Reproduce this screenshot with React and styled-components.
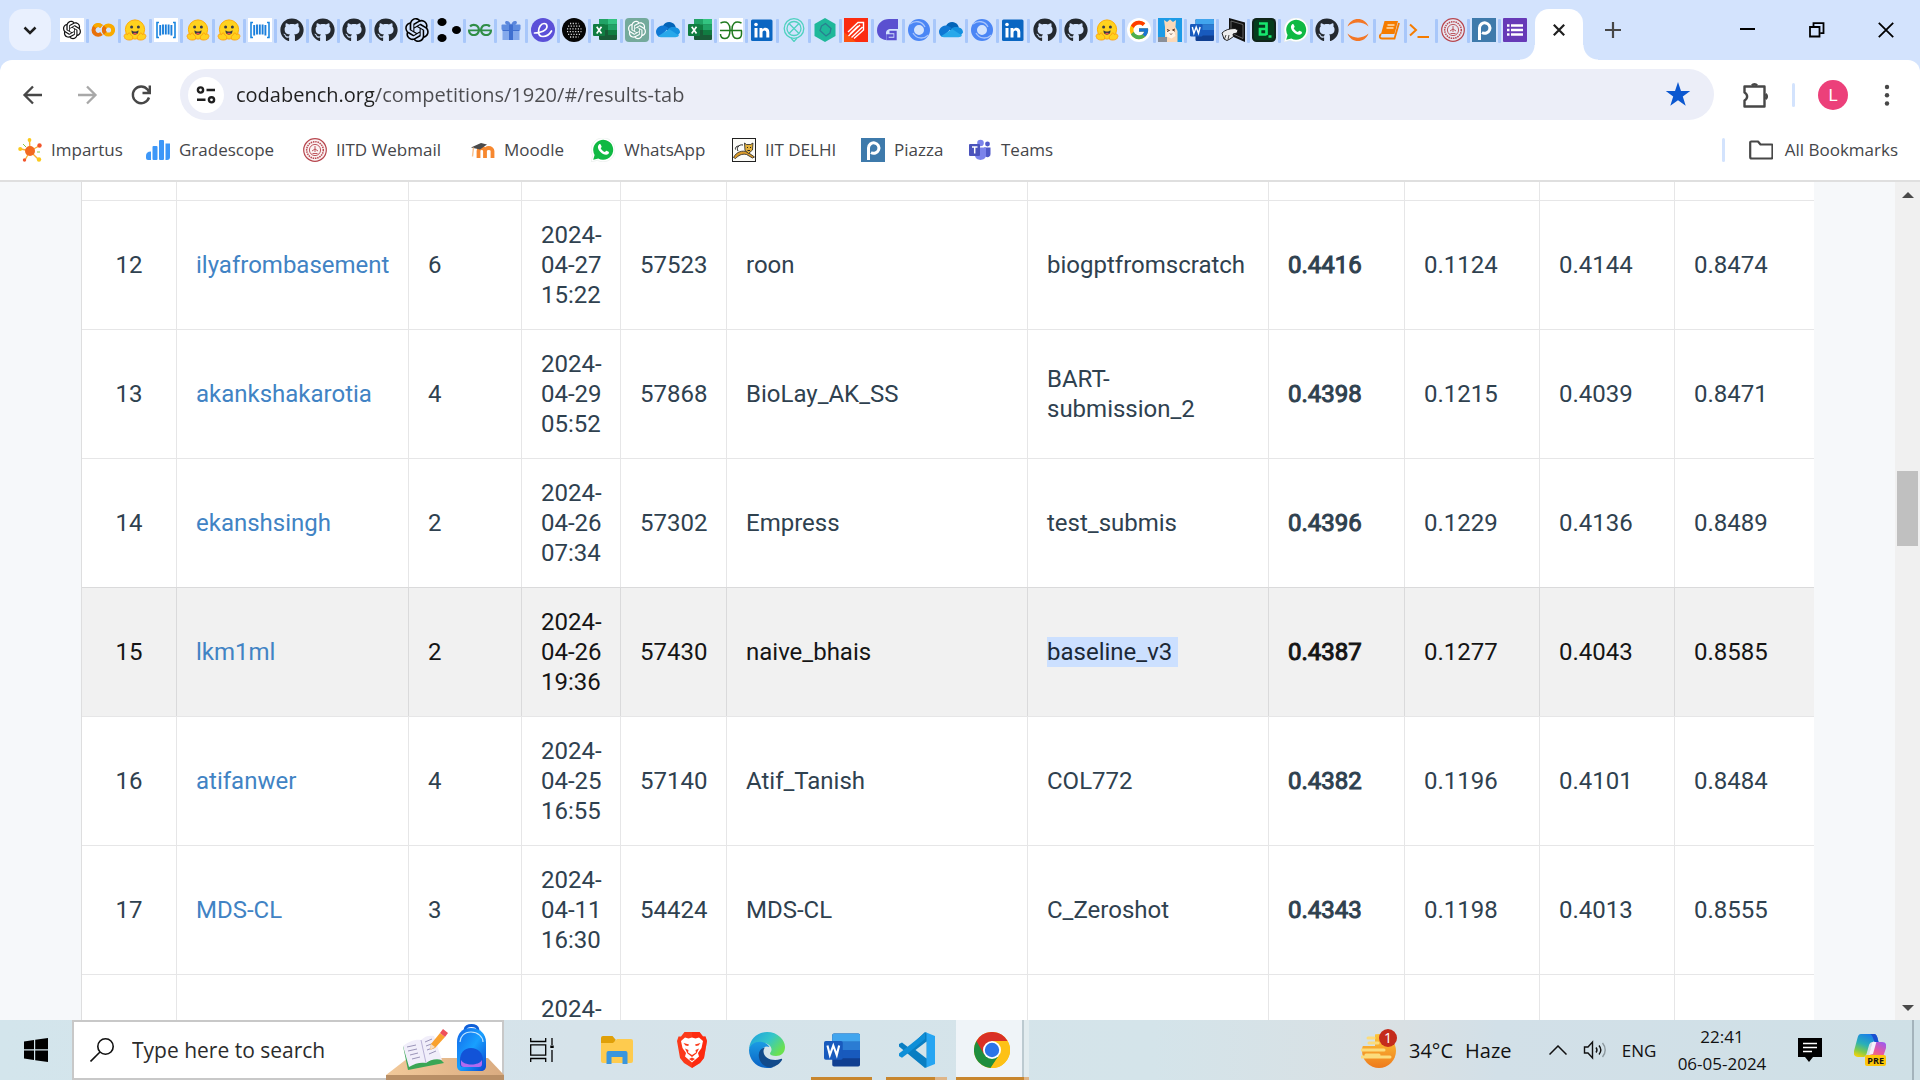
import React from "react";
import styled, { createGlobalStyle, css } from "styled-components";
import { RiOpenaiFill } from "react-icons/ri";
import { FaGithub } from "react-icons/fa";
import { FcGoogle } from "react-icons/fc";
import { SiGeeksforgeeks } from "react-icons/si";

const GlobalStyle = createGlobalStyle`
  *, *::before, *::after { box-sizing: border-box; }
  html, body, #root { height: 100%; }
  body { margin: 0; overflow: hidden; background: #fff; font-family: "Open Sans", sans-serif; }
  button, input { font: inherit; color: inherit; border: 0; padding: 0; margin: 0; background: none; outline: none; }
  button { cursor: pointer; }
  a { text-decoration: none; color: inherit; }
  svg { display: block; flex: none; }
`;

/* ---------- icons ---------- */

const Icon = ({ size = 24, w, h, box = "0 0 24 24", children, ...rest }) => (
  <svg width={w || size} height={h || size} viewBox={box} fill="none" aria-hidden="true" {...rest}>
    {children}
  </svg>
);

const OpenAiWhite = () => (
  <Icon>
    <rect width="24" height="24" fill="#fff" />
    <RiOpenaiFill x="1" y="1" size={22} color="#111" />
  </Icon>
);
const OpenAiBlack = () => (
  <Icon box="2 2 20 20"><RiOpenaiFill size={24} color="#000" /></Icon>
);
const OpenAiGreen = () => (
  <Icon>
    <rect width="24" height="24" rx="4" fill="#74aa9c" />
    <RiOpenaiFill x="1" y="1" size={22} color="#fff" />
  </Icon>
);
const Colab = () => (
  <Icon strokeWidth="4">
    <circle cx="17.500" cy="12" r="4.600" stroke="#f9ab00" />
    <path d="M10.500 8.400A4.800 4.800 0 1 0 10.500 15.600" stroke="#e8710a" />
    <path d="M3.400 8.800a4.800 4.800 0 0 1 7-.4" stroke="#f9ab00" />
    <path d="M14.200 15.200a4.600 4.600 0 0 1 0-6.400" stroke="#e8710a" />
  </Icon>
);
const Hug = () => (
  <Icon>
    <circle cx="12" cy="11.500" r="9.600" fill="#ffd21e" stroke="#ffac03" strokeWidth="1" />
    <path d="M8.600 12.300c1.600 1.600 5.200 1.600 6.800 0 .5 2.600-1.200 4.400-3.400 4.400s-3.900-1.800-3.400-4.400z" fill="#3a3b45" />
    <path d="M10 15.600c1-1.200 3-1.200 4 0-1 1.200-3 1.200-4 0z" fill="#ef4e4e" />
    <circle cx="8.600" cy="9" r="1.500" fill="#3a3b45" /><circle cx="15.400" cy="9" r="1.500" fill="#3a3b45" />
    <path d="M1.500 17c.5-1.500 1.800-1 3-.4l1-1.600c1-.6 1.700.2 1.700 1.200 2.500 1.500 3.300 3 2 5.300-2.500 1-7.500.6-7.700-2.200-.6-.7-.5-1.600 0-2.300z" fill="#ffd21e" stroke="#ff9d0b" strokeWidth=".9" />
    <path d="M22.500 17c-.5-1.500-1.800-1-3-.4l-1-1.600c-1-.6-1.700.2-1.700 1.200-2.500 1.500-3.300 3-2 5.300 2.500 1 7.500.6 7.700-2.200.6-.7.5-1.600 0-2.300z" fill="#ffd21e" stroke="#ff9d0b" strokeWidth=".9" />
  </Icon>
);
const Barcode = () => (
  <Icon>
    <rect width="24" height="24" fill="#fff" />
    <path d="M5 4.500H3v15h2M19 4.500h2v15h-2" stroke="#1a86e0" strokeWidth="1.600" />
    <path d="M6.200 7v10.500M9 6.500v10M11.800 6.500v10M14.600 6.500v10M17.400 7v10.500" stroke="#1a7fdc" strokeWidth="1.900" />
  </Icon>
);
const GitHub = () => <FaGithub size={24} color="#24292f" aria-hidden="true" />;
const Dots = () => (
  <Icon>
    <g fill="#000"><ellipse cx="5" cy="4" rx="4.600" ry="4" /><ellipse cx="5" cy="20" rx="4.600" ry="4" /><ellipse cx="19.500" cy="12" rx="4.500" ry="4" /></g>
  </Icon>
);
const Gfg = () => <SiGeeksforgeeks size={24} color="#2f8d46" aria-hidden="true" />;
const GfgWhite = () => (
  <Icon>
    <rect width="24" height="24" fill="#fff" />
    <path d="M1.500 5c7-3 9.500 1.500 9.500 6.500 0 5-1.200 9-5 9-2.400 0-4.500-1.500-4.500-4.500M1 12.500h22M22.500 5c-7-3-9.500 1.500-9.500 6.500 0 5 1.200 9 5 9 2.400 0 4.500-1.500 4.500-4.500v-3.500" stroke="#1f7a1f" strokeWidth="1.500" />
  </Icon>
);
const Gift = () => (
  <Icon>
    <path d="M12 7.500C5 8 5 2.500 8 3c2 0 3.500 2 4 4.500.5-2.500 2-4.500 4-4.500 3-.5 3 5-4 4.500z" fill="#5a86dc" />
    <rect x="2.500" y="6.500" width="19" height="5.500" rx="1" fill="#5f8de0" />
    <rect x="3.500" y="12" width="17" height="10" fill="#84a9ec" />
    <rect x="10" y="6.500" width="4" height="15.500" fill="#3f6fd0" />
    <path d="M3.500 12.500h17" stroke="#3f6fd0" strokeWidth="1" />
  </Icon>
);
const ELogo = () => (
  <Icon>
    <circle cx="12" cy="12" r="12" fill="#5b50d8" />
    <path d="M3.500 15c6 0 12.500-2.500 12.500-6.500 0-2-1.400-3-3-3-3 0-5.500 4-5.500 8 0 3 1.500 5 4.500 5 3.500 0 6.500-2 8.500-5.500" stroke="#fff" strokeWidth="1.700" strokeLinecap="round" />
  </Icon>
);
const DotGrid = () => (
  <Icon>
    <circle cx="12" cy="12" r="12" fill="#060606" />
    <g stroke="#d8d8d8" strokeWidth="1.300" strokeDasharray="1.200 1.500">
      <path d="M8 5.500h8.500M6 8.200h12.500M5 10.900h14.500M5 13.600h14.500M6 16.300h12.500M8 19h8.500" />
    </g>
  </Icon>
);
const Excel = () => (
  <Icon>
    <rect x="6" y="1" width="18" height="21" rx="1" fill="#185c37" />
    <rect x="6" y="1" width="9" height="10" fill="#21a366" /><rect x="15" y="1" width="9" height="5.500" fill="#33c481" />
    <rect x="15" y="6.500" width="9" height="5.500" fill="#21a366" /><rect x="6" y="6.500" width="9" height="5.500" fill="#107c41" />
    <rect x="15" y="12" width="9" height="5" fill="#107c41" />
    <rect x="0" y="6" width="12" height="12" rx="1" fill="#107c41" />
    <path d="M3.700 8.800l4.800 6.600M8.500 8.800l-4.800 6.600" stroke="#fff" strokeWidth="1.700" />
  </Icon>
);
const OneDrive = () => (
  <Icon>
    <path d="M7 8c1.500-3.500 6-5 9.500-3 2 1 3 2.700 3.300 4.500l-6 5z" fill="#0364b8" />
    <path d="M1 17c-2.500-3.500 0-9 5.500-9.500 2.500 0 4 1 6 2.500L4 19c-1.200-.2-2.300-.9-3-2z" fill="#0f78d4" />
    <path d="M12 11c2-2 5-2.500 8-1.500 3 .5 4 3 4 5l-3 4z" fill="#1490df" />
    <path d="M2 18.200L13 11l10 6.500c-.8 1.200-2 1.700-3.500 1.700H6c-1.500 0-3-.2-4-1z" fill="#28a8ea" />
  </Icon>
);
const LinkedIn = () => (
  <Icon>
    <rect x="1" y="1.500" width="21.500" height="21.500" rx="1.500" fill="#0a66c2" />
    <path d="M4.500 10h3v9.500h-3zM9.500 10h2.900v1.400c1.600-2.600 6.900-2.200 6.900 2.600v5.500h-3V14.500c0-2.900-3.800-2.700-3.800 0v5h-3z" fill="#fff" />
    <circle cx="6" cy="6.500" r="1.800" fill="#fff" />
  </Icon>
);
const PinX = () => (
  <Icon stroke="#4fd1c0" strokeWidth="1.300">
    <circle cx="12" cy="10.500" r="9.800" /><circle cx="12" cy="10.500" r="7" />
    <path d="M7 5.500l10 10M17 5.500l-10 10M9 20l3 3.500 3-3.500" />
  </Icon>
);
const HexTeal = () => (
  <Icon>
    <path d="M12 0l10.500 6v12L12 24 1.500 18V6z" fill="#1fb89a" />
    <path d="M8.500 8l4-2.500 5.500 5-1 4.500-4 3-6-5.500z" stroke="#2a7f90" strokeWidth="1.300" />
  </Icon>
);
const RedLines = () => (
  <Icon>
    <rect width="24" height="24" fill="#fb2c10" /><path d="M0 14v10h12z" fill="#ff7a10" opacity=".5" />
    <path d="M4 14L14 4.500h5.500V12L10 20.500M4.500 18L16 7M7.500 19.500L18.500 9M6 16l8-8" stroke="#fff" strokeWidth="1.400" />
  </Icon>
);
const PurpleG = () => (
  <Icon>
    <path d="M22 1v10h-7c-3.500 0-5 2-5 4v7C5 21.500 1 18 1 12.500 1 5.500 6.500 1 13 1z" fill="#5a50d0" />
    <path d="M13.500 14h6v7h-8v-3.500h6" stroke="#5a50d0" strokeWidth="2.400" />
  </Icon>
);
const Swirl = () => (
  <Icon>
    <circle cx="12" cy="12" r="8" stroke="#4b86f5" strokeWidth="6" />
    <path d="M3 6c5-4 12-3 15 3M21.500 17c-5 4.500-12 4-15.500-2" stroke="#a9c5fb" strokeWidth="1.300" />
    <circle cx="12" cy="12" r="4.200" fill="#d3e3fd" />
  </Icon>
);
const Llama = () => (
  <Icon>
    <rect width="24" height="24" fill="#1d9be6" />
    <path d="M7 24V9L6 2l3 2 3-2.500L15 4l3-2-.5 7 2 4v11z" fill="#fbd9b8" />
    <path d="M8 13l8-1 1.500 6-4 2.500-5-2z" fill="#fff3e6" />
    <path d="M9 11.500l2.500 1L9 13.500M17 11l-2.500 1 2.500 1.200M12 15.500l1 1 1-1" stroke="#5b3a2b" strokeWidth="1" />
    <rect y="19" width="9" height="5" fill="#8a8f98" />
  </Icon>
);
const WordGlyph = ({ size = 24 }) => (
  <Icon size={size}>
    <rect x="5.500" y="1" width="18.500" height="22" rx="1.200" fill="#103f91" />
    <path d="M5.500 6.500h18.500V2.200A1.200 1.200 0 0 0 22.800 1H6.700a1.200 1.200 0 0 0-1.200 1.200z" fill="#41a5ee" />
    <rect x="5.500" y="6.500" width="18.500" height="5.500" fill="#2b7cd3" />
    <rect x="5.500" y="12" width="18.500" height="5.500" fill="#185abd" />
    <rect x="0" y="6" width="12.500" height="12.500" rx="1.200" fill="#185abd" />
    <path d="M2.300 9l1.600 6.400L6.200 9l2.300 6.400L10.100 9" stroke="#fff" strokeWidth="1.400" />
  </Icon>
);
const Hand = () => (
  <Icon>
    <path d="M8 0l16 4.500V24L8 17z" fill="#111" /><path d="M10 3l12 3.500v14L10 15z" stroke="#777" strokeWidth=".8" />
    <path d="M1 15c3-3 7-4.500 13-4.500l3 1.500-1 3-4 1 .5 2.500L9 21l-3 1.500L3 21z" fill="#eee" stroke="#111" strokeWidth=".9" />
    <path d="M5 17l-1.500 4M8 17l-1 4.500" stroke="#111" strokeWidth=".8" />
  </Icon>
);
const GreenA = () => (
  <Icon>
    <rect width="24" height="24" rx="4.500" fill="#10251a" /><rect x="2" y="2" width="20" height="20" rx="3" fill="#053d1c" />
    <path d="M7 5.500h7.500V17M14.500 11H8v5.500h6.500M16.500 18.500h3" stroke="#17e86d" strokeWidth="2.700" />
  </Icon>
);
const WhatsApp = () => (
  <Icon>
    <path d="M0 24l1.700-6.200A12 12 0 1 1 6.300 22.300z" fill="#fff" stroke="#dfe7e2" strokeWidth=".5" />
    <path d="M2.200 21.800l1.400-4.900A10 10 0 1 1 7.300 20.500z" fill="#10b943" />
    <path d="M8.200 6.200c.6-.4 1.300-.2 1.500.3l.9 2c.2.500-.6 1.300-.9 1.700.9 1.900 2.300 3.100 4.200 3.900.5-.5 1.100-1.500 1.600-1.300l2.100 1c.7.4.3 1.600-.3 2.200-3.600 3-11.400-3.600-10.300-7.800.2-.8.600-1.500 1.200-2z" fill="#fff" />
  </Icon>
);
const Google = () => (
  <Icon><circle cx="12" cy="12" r="12" fill="#fff" /><FcGoogle x="1" y="1" size={22} /></Icon>
);
const Jupyter = () => (
  <Icon>
    <path d="M1.500 8.500C5-1.500 19-1.500 22.500 8.500 17 3 7 3 1.500 8.500zM1.500 15.500C5 25.500 19 25.500 22.500 15.500 17 21 7 21 1.500 15.500z" fill="#f37726" />
  </Icon>
);
const Book = () => (
  <Icon>
    <path d="M6.500 3H20l-3.500 13H3z" fill="#f57c00" /><path d="M9.500 7h7M8.500 10h7" stroke="#ffe0b2" strokeWidth="1.500" />
    <path d="M3 16c-2 2-1.500 4.500 1 4.500h12.500L21 5" stroke="#f57c00" strokeWidth="1.800" />
  </Icon>
);
const Shell = () => (
  <Icon><path d="M1 6.500l6 5.500-6 5.500M8.500 19H20" stroke="#f57c00" strokeWidth="2" /></Icon>
);
const Seal = () => (
  <Icon stroke="#b8474f">
    <circle cx="12" cy="12" r="11.300" fill="#f7e9ea" fillOpacity=".6" strokeWidth="1.200" />
    <circle cx="12" cy="12" r="8.300" strokeWidth="1.500" strokeDasharray="1.500 .8" />
    <circle cx="12" cy="12" r="5.600" strokeWidth=".9" />
    <path d="M12 8v6M9.500 15.500h5M9 13l3-2 3 2" strokeWidth=".9" />
  </Icon>
);
const Piazza = () => (
  <Icon>
    <rect width="24" height="24" fill="#3e7aab" />
    <path d="M7.500 22V9.500M7.500 10a5.200 5.200 0 1 1 2.500 4.500" stroke="#fff" strokeWidth="3" />
  </Icon>
);
const ListPurple = () => (
  <Icon>
    <rect width="24" height="24" rx="1" fill="#673ab7" />
    <path d="M8 7.500h12M8 12h12M8 16.500h12" stroke="#fff" strokeWidth="2.400" />
    <path d="M4 7.500h2.500M4 12h2.500M4 16.500h2.500" stroke="#fff" strokeWidth="2.400" />
  </Icon>
);
const Impartus = () => (
  <Icon>
    <path d="M12 13L11.500 2M12 13L3 11M12 13l9-5M12 13l8 8M12 13L7 22" stroke="#fbb034" strokeWidth="1.400" />
    <circle cx="12" cy="13" r="5" fill="#f26a21" />
    <circle cx="11.500" cy="2" r="1.900" fill="#fbc91b" /><circle cx="2.200" cy="11" r="2" fill="#fbc91b" /><circle cx="21.500" cy="7.500" r="2.200" fill="#f2552c" />
    <circle cx="21" cy="21.500" r="2.200" fill="#fbc91b" /><circle cx="6.500" cy="22" r="1.700" fill="#f2552c" />
    <path d="M5 6l3 3M19 14h3" stroke="#8cc63f" strokeWidth="1" />
  </Icon>
);
const Gradescope = () => (
  <Icon>
    <g fill="#3d97f8"><path d="M0 18c0-3 1.500-4.500 5-4.500V22H2a2 2 0 0 1-2-2z" /><rect x="6.500" y="8" width="5" height="14" rx="1" /><rect x="13" y="2" width="5" height="20" rx="1" /><path d="M19.500 5.500h4.500V19a3 3 0 0 1-3 3h-1.500z" /></g>
  </Icon>
);
const Moodle = () => (
  <Icon>
    <path d="M7.500 20v-7c0-4 6.500-4 6.500 0v7M14 13c0-4 7.500-4 7.500 0v7" stroke="#f7882f" strokeWidth="3.800" />
    <path d="M0 9.500L10 5l6 1.500-7 5z" fill="#4a4a4a" /><path d="M2.500 9.500l-1 9" stroke="#f9c08c" strokeWidth="1.400" />
  </Icon>
);
const IitDelhi = () => (
  <Icon>
    <rect x=".5" y=".5" width="23" height="23" fill="#fbfbf7" stroke="#222" />
    <path d="M1.500 19.500c3-6 9-7.500 14-5.500l7 5-2 1-6-3.500c-5-1-8 1-11 4z" fill="#d99a2b" stroke="#222" strokeWidth=".8" />
    <path d="M12.500 5l2 1.500h4l2.500-1.500-.5 7-4 3.500-3.500-3z" fill="#e2b03a" stroke="#222" strokeWidth=".8" />
    <path d="M11 7c-4-1-7 3-5 6M7 8c-3 0-4 2-3.500 3.500M15 9.500h1M18 9.500h1M15.500 12.500h2.500" stroke="#222" strokeWidth="1" />
  </Icon>
);
const Teams = () => (
  <Icon>
    <circle cx="12.500" cy="5" r="3.300" fill="#7b83eb" /><circle cx="19.500" cy="6" r="2.400" fill="#5059c9" />
    <path d="M16 9.500h6.500v6.500c0 4-5 4-6.500 1z" fill="#5059c9" /><path d="M7 9.500h11v7.500c0 6.500-11 6.500-11 0z" fill="#7b83eb" />
    <rect x="1" y="6" width="11" height="12" rx="1" fill="#4b53bc" /><path d="M4 9h5.500M6.700 9v6.500" stroke="#fff" strokeWidth="1.500" />
  </Icon>
);

const Explorer = () => (
  <Icon w={32} h={28} box="0 0 32 28">
    <path d="M0 2a2 2 0 0 1 2-2h9.500l3 3.500V8H0z" fill="#e0a008" />
    <path d="M0 7h12l4-4h14a2 2 0 0 1 2 2v20a2 2 0 0 1-2 2H2a2 2 0 0 1-2-2z" fill="#fecb4e" />
    <path d="M5.500 28V17a2 2 0 0 1 2-2h17a2 2 0 0 1 2 2v11h-5v-7h-11v7z" fill="#3a96dd" />
  </Icon>
);
const Brave = () => (
  <Icon w={30} h={36} box="0 0 30 36">
    <path d="M7.500 0h15L26 4.500h2.500L30 9l-3 17-4 5-8 5-8-5-4-5L0 9l1.500-4.500H4z" fill="#fb3a1a" />
    <path d="M15 0h7.500L26 4.500h2.500L30 9l-3 17-4 5-8 5z" fill="#ff1f08" opacity=".6" />
    <path d="M4 9l4-3.500 3.500 1 3.500-1 3.500 1 3.500-1L26 9l-1.500 7-3.500 5 1 3.500-7 6-7-6 1-3.500L5.500 16z" fill="#fff" />
    <path d="M6.500 11l5.500 1.500-.8 1.500-2.700-.5zM23.500 11L18 12.500l.8 1.500 2.700-.5z" fill="#fb3a1a" />
    <path d="M8 16.500l3.500 1.500-.5 2.500 4 2.500 4-2.500-.5-2.500 3.500-1.500-2.500 5-4.500 3.500-4.500-3.500zM12 27l3-1.500 3 1.500-3 2z" fill="#fb3a1a" />
  </Icon>
);
const Edge = () => (
  <Icon size={36} box="0 0 36 36">
    <defs>
      <linearGradient id="edgeTop" x1="0" y1="0" x2="1" y2=".6"><stop offset="0" stopColor="#1b9de2" /><stop offset=".55" stopColor="#35c6c9" /><stop offset="1" stopColor="#6be14f" /></linearGradient>
      <linearGradient id="edgeLow" x1="0" y1="0" x2="0" y2="1"><stop offset="0" stopColor="#1b9ce4" /><stop offset="1" stopColor="#0a62c4" /></linearGradient>
    </defs>
    <path d="M0 17C1 7 8 0 18 0c11 0 18 8 18 15 0 6-4 9-9 9-4 0-6-1-6-2.500 0-1 1.500-1.500 1.500-4C22.500 14 19 11 14 11 7 11 2 14 0 17z" fill="url(#edgeTop)" />
    <path d="M0 18c1-6 7-9 13-8 4 .6 6.500 3 7.500 5-5-2-8 2-8 6 0 8 6 14 12 14-2 1-4 1-6.500 1C8 36 0 28 0 18z" fill="url(#edgeLow)" />
    <path d="M16 15.500c-5 1-7 5-6 10 1 6 6 10 12 10 5-1 9-4 11-7.500.5-1-.3-1.500-1.300-1C24 30 14.500 26 14.500 19.500c0-1.600.6-3 1.500-4z" fill="#114a8b" />
  </Icon>
);
const VsCode = () => (
  <Icon size={36} box="0 0 36 36">
    <path d="M26 0L9.500 15.500 3 10.500 0 12v2.500L26 36l2-1V1z" fill="#0a7ec2" />
    <path d="M0 24L26 8V1L3 22z" fill="#0a7ec2" /><path d="M0 21.500v2.500l3 1.800 7-5.300L26 7V1z" fill="#0f8fd8" />
    <path d="M26 0l10 4v28l-10 4c1-.5 1.500-1 1.500-2V2.500c0-1-.5-2-1.500-2.500z" fill="#27a5f2" />
    <path d="M27.500 9.500v17L16.500 18z" fill="#d5e4ea" />
  </Icon>
);
const Chrome = () => (
  <Icon size={36} box="0 0 36 36">
    <circle cx="18" cy="18" r="18" fill="#fbbc05" />
    <path d="M18 18L2.400 9A18 18 0 0 0 16.500 36l9-13.500z" fill="#1e8e3e" />
    <path d="M2.400 9a18 18 0 0 1 31.200 0H18l-7.800 13.500z" fill="#d93025" />
    <path d="M18 9h15.600A18 18 0 0 1 16.800 36l9-13.500z" fill="#fdc116" />
    <circle cx="18" cy="18" r="9" fill="#fff" /><circle cx="18" cy="18" r="7.200" fill="#2b74e8" />
  </Icon>
);
const StartLogo = () => (
  <Icon><path d="M0 3.400L10 2v9.300H0zM11.200 1.800L24 0v11.300H11.200zM0 12.500h10V22L0 20.600zM11.200 12.500H24V24l-12.800-1.800z" fill="#000" /></Icon>
);
const SearchGlass = () => (
  <Icon stroke="#111" strokeWidth="1.600"><circle cx="15.500" cy="8.500" r="7.700" /><path d="M10 14L.5 23.500" /></Icon>
);
const TaskView = () => (
  <Icon stroke="#000" strokeWidth="1.300"><path d="M.7 0v3.500h15V0M.7 6.800h15v10.400H.7zM.7 24v-3.500h15V24M22 0v7M22 12v12" /><rect x="20.300" y="7.500" width="3.400" height="2.500" fill="#000" stroke="none" /></Icon>
);
const DeskArt = () => (
  <Icon w={120} h={60} box="0 0 120 60">
    <defs>
      <linearGradient id="packBody" x1="0" y1="0" x2="1" y2="1"><stop offset="0" stopColor="#1466e8" /><stop offset=".5" stopColor="#18a0ff" /><stop offset="1" stopColor="#0b46d0" /></linearGradient>
      <linearGradient id="deskTop" x1="0" y1="0" x2="1" y2="0"><stop offset="0" stopColor="#f2c99a" /><stop offset="1" stopColor="#d9ab80" /></linearGradient>
    </defs>
    <path d="M24 38h80l16 17H2z" fill="url(#deskTop)" /><rect x="2" y="55" width="118" height="5" fill="#b98f66" />
    <path d="M19 26l5 24 36-7-5-5z" fill="#3aa655" /><path d="M19 26l6 21c6-4 12-5 17-4 4-3 10-5 16-3l-8-24c-5-1-9 0-13 4-6-1-13 2-18 6z" fill="#f1eefa" />
    <path d="M37 20l5 23" stroke="#b9b2d6" /><path d="M23 27l9-2M24 31l9-2M26 35l8-2M28 39l8-2M41 22l7-3M42 26l8-3M43 30l8-3M45 34l7-3" stroke="#9a94b8" strokeWidth="1" />
    <path d="M46 30l1-6 9-11 5 4-10 11z" fill="#f9a12e" /><path d="M56 13l3-4 5 4-3 4z" fill="#ef4f5a" /><path d="M46 30l1-6 4 3z" fill="#f6dcc0" />
    <path d="M81 10c0-6 13-6 13 0" stroke="#0f5fd8" strokeWidth="3" />
    <path d="M73 22c0-8 5-14 14-14s15 6 15 14v24c0 3-2 5-5 5H78c-3 0-5-2-5-5z" fill="url(#packBody)" />
    <path d="M76 22c0-5 4-10 11-10s12 5 12 10" stroke="#bfe4ff" strokeWidth="1.200" />
    <path d="M76 40c0-7 4-12 11-12s12 5 12 12v4c0 2-1 3-3 3H79c-2 0-3-1-3-3z" fill="#1253d8" /><path d="M77 40c3 6 18 6 21 0v4c0 2-1 3-3 3H80c-2 0-3-1-3-3z" fill="#b06af0" />
  </Icon>
);
const Haze = () => (
  <Icon w={36} h={40} box="0 0 36 40">
    <defs><linearGradient id="sun" x1="0" y1="0" x2="0" y2="1"><stop offset="0" stopColor="#fcc63a" /><stop offset="1" stopColor="#ee7a1c" /></linearGradient></defs>
    <circle cx="18" cy="21" r="17" fill="url(#sun)" /><path d="M0 0h14v16H0z" fill="#d3e1e7" />
    <path d="M7 8h6M8 13h9M1 20h22M5 25h13M1 27h28" stroke="#fbdc7c" strokeWidth="3" strokeLinecap="round" />
  </Icon>
);
const Copilot = () => (
  <Icon w={32} h={32} box="0 0 32 32">
    <defs>
      <linearGradient id="copA" x1=".6" y1="0" x2=".2" y2="1"><stop offset="0" stopColor="#1a7fe8" /><stop offset=".45" stopColor="#2ab0b8" /><stop offset=".75" stopColor="#7fcb4c" /><stop offset="1" stopColor="#f5d20a" /></linearGradient>
      <linearGradient id="copB" x1=".9" y1="0" x2=".3" y2="1"><stop offset="0" stopColor="#9a5bf2" /><stop offset=".5" stopColor="#e8589e" /><stop offset="1" stopColor="#fb8a4c" /></linearGradient>
    </defs>
    <path d="M7 0h13c2 0 3 2 3.500 4l1 4h-5c-3 0-4 1-5 5l-2 7c-.8 2.500-2 3-4 3H4c-3 0-5-2-4-6L3.500 4C4.200 1.500 5 0 7 0z" fill="url(#copA)" />
    <path d="M20 8h8c3 0 5 2 4 6l-3 9c-1 3-2 4-5 4H11c2 0 3-1 4-4l2.500-11c.5-2.500 1-4 2.500-4z" fill="url(#copB)" />
    <path d="M15 21l3-12c.5-1 1-1.500 2.500-1.500h2L19 20z" fill="#f4f1fb" />
    <path d="M16 0h4c2 0 3 2 3.500 4l1 4h-4c-1-3-2-7-4.500-8z" fill="#1b4fd0" />
  </Icon>
);

/* ---------- browser frame ---------- */

const Screen = styled.div`
  display: flex;
  flex-direction: column;
  height: 100vh;
  background: #d3e3fd;
`;

const TabStrip = styled.header`
  display: flex;
  height: 60px;
  padding: 9px 0 0 9px;
`;

const TabMenu = styled.button`
  display: grid;
  place-items: center;
  flex: none;
  width: 42px;
  height: 42px;
  border-radius: 14px;
  background: #e9f0fe;
`;

const TabList = styled.div`
  display: flex;
  justify-content: space-between;
  flex: 1;
  margin: 9px 7px 0 9px;
  height: 25px;
`;

const Tab = styled.button`
  width: 24px;
  height: 24px;
`;

const TabRule = styled.span`
  width: 3px;
  height: 24px;
  margin-top: 1px;
  border-radius: 1px;
  background: #a8c7fa;
`;

const ActiveTab = styled.button`
  display: grid;
  place-items: center;
  position: relative;
  flex: none;
  width: 48px;
  height: 51px;
  padding-bottom: 9px;
  border-radius: 14px 14px 0 0;
  background: #fff;
  &::before, &::after {
    content: "";
    position: absolute;
    bottom: 0;
    width: 15px;
    height: 15px;
  }
  &::before { right: 100%; background: radial-gradient(circle at 0 0, transparent 14px, #fff 15px); }
  &::after { left: 100%; background: radial-gradient(circle at 100% 0, transparent 14px, #fff 15px); }
`;

const StripButton = styled.button`
  display: grid;
  place-items: center;
  width: ${(p) => p.$width}px;
  height: 42px;
`;

const WindowControls = styled.div`
  display: flex;
  margin-left: 70px;
`;

const Toolbar = styled.div`
  display: flex;
  align-items: center;
  height: 69px;
  padding: 0 6px;
  background: #fff;
  border-radius: 12px 12px 0 0;
`;

const ToolButton = styled.button`
  display: grid;
  place-items: center;
  width: 54px;
  height: 42px;
  color: ${(p) => (p.$faded ? "#a8a8a8" : "#474747")};
`;

const Omnibox = styled.div`
  display: flex;
  align-items: center;
  flex: 1;
  height: 51px;
  margin: 0 13px 0 12px;
  padding: 0 20px 0 8px;
  border-radius: 26px;
  background: #eceef8;
`;

const SiteInfo = styled.button`
  display: grid;
  place-items: center;
  width: 36px;
  height: 36px;
  margin-right: 12px;
  border-radius: 50%;
  background: #fff;
`;

const Address = styled.input`
  flex: 1;
  min-width: 0;
  height: 40px;
  font-size: 20px;
  line-height: 40px;
  color: transparent;
  background: linear-gradient(90deg, #1f1f1f 138px, #4c4c50 138px);
  background-clip: text;
  -webkit-background-clip: text;
`;

const Divider = styled.span`
  width: 3px;
  height: 24px;
  margin: 0 ${(p) => p.$space || 0}px;
  border-radius: 2px;
  background: #d3e3fd;
`;

const Avatar = styled.span`
  display: grid;
  place-items: center;
  width: 30px;
  height: 30px;
  border-radius: 50%;
  background: #ec407a;
  color: #fff;
  font: 17px Roboto, sans-serif;
`;

const BookmarkBar = styled.nav`
  display: flex;
  align-items: center;
  height: 53px;
  padding: 0 22px 9px 18px;
  background: #fff;
  border-bottom: 2px solid #dfdfdf;
  font-size: 17px;
  line-height: 24px;
  color: #45464a;
`;

const BookmarkList = styled.div`
  display: grid;
  grid-template-columns: 128px 157px 168px 120px 141px 129px 107px auto;
  margin-right: auto;
`;

const Bookmark = styled.a`
  display: flex;
  align-items: center;
  gap: 9px;
  white-space: nowrap;
`;

const AllBookmarks = styled.button`
  display: flex;
  align-items: center;
  gap: 12px;
  margin-left: 24px;
`;

/* ---------- page ---------- */

const PageArea = styled.div`
  display: flex;
  flex: 1;
  min-height: 0;
  overflow: hidden;
  background: #f6f8fa;
`;

const Page = styled.main`
  flex: 1;
  min-width: 0;
  overflow: hidden;
  padding: 0 81px;
`;

const TableClip = styled.div`
  overflow: hidden;
  border-left: 1px solid #dededf;
  background: #fff;
`;

const ResultsTable = styled.table`
  width: 100%;
  table-layout: fixed;
  border-collapse: separate;
  border-spacing: 0;
  font: 24px/30px Roboto, sans-serif;
  color: #2f414f;
`;

const Col = styled.col`
  width: ${(p) => (p.$width ? `${p.$width}px` : "auto")};
`;

const Cell = styled.td`
  padding: 19px;
  border-top: 1px solid #e6e6e7;
  border-right: 1px solid #e6e6e7;
  text-align: left;
  white-space: nowrap;
  &:first-child { text-align: center; }
  &:last-child { border-right: 0; }
  ${(p) => p.$wrap && css`white-space: normal;`}
  ${(p) => p.$strong && css`-webkit-text-stroke: 1px currentColor;`}
`;

const Row = styled.tr`
  ${(p) => p.$active && css`
    background: #f1f1f1;
    color: #151515;
    ${Cell} { border-color: #dadadb; }
  `}
`;

const EdgeCell = styled(Cell)`
  height: 18px;
  padding: 0;
  border-top: 0;
`;

const UserLink = styled.a`
  color: #4183c4;
`;

const DateLine = styled.span`
  display: block;
`;

const Selected = styled.mark`
  color: #1b2836;
  background: #cce0ff;
  padding: 1px 6px 1px 0;
`;

const ScrollBar = styled.div`
  display: flex;
  flex-direction: column;
  align-items: center;
  width: 25px;
  background: #f0f0f0;
`;

const ScrollArrow = styled.button`
  display: grid;
  place-items: center;
  width: 25px;
  height: 25px;
  color: #4a4a4a;
`;

const ScrollTrack = styled.div`
  flex: 1;
  padding-top: 264px;
`;

const ScrollThumb = styled.div`
  width: 21px;
  height: 75px;
  background: #c0c0c0;
`;

/* ---------- taskbar ---------- */

const Taskbar = styled.footer`
  display: flex;
  height: 60px;
  flex: none;
  background: linear-gradient(90deg, #d3e5ec, #d6e3ea 30%, #d4e4ea 60%, #d9e0e3 73%, #d2e0e8 78%, #cfe0e6);
  color: #111;
`;

const StartButton = styled.button`
  display: grid;
  place-items: center;
  width: 72px;
`;

const SearchBox = styled.label`
  display: flex;
  align-items: center;
  width: 432px;
  padding-left: 18px;
  background: #fff;
  box-shadow: inset 0 0 0 2px #c8c8c8;
`;

const SearchInput = styled.input`
  flex: 1;
  min-width: 0;
  padding-left: 18px;
  font-size: 21px;
  line-height: 30px;
  &::placeholder { color: #2b2b2b; opacity: 1; }
`;

const TaskButton = styled.button`
  display: grid;
  grid-template-rows: 1fr 3px;
  justify-items: center;
  align-items: center;
  width: 75px;
  padding-top: 3px;
  ${(p) => p.$current && css`
    background: linear-gradient(90deg, transparent 2px, #eff4f8 2px 68px, #bccad0 68px 70px, #e2ecef 70px);
  `}
`;

const Running = styled.span`
  width: ${(p) => (p.$wide ? "73px" : "61px")};
  height: 3px;
  justify-self: ${(p) => (p.$wide ? "end" : "center")};
  background: linear-gradient(90deg, #c8862e calc(100% - ${(p) => p.$tail || 0}px), #deb588 0);
`;

const Tray = styled.div`
  display: flex;
  align-items: center;
  margin-left: auto;
`;

const TrayButton = styled.button`
  display: grid;
  place-items: center;
  width: ${(p) => p.$width}px;
  height: 60px;
  font-size: 17px;
`;

const Weather = styled.button`
  display: flex;
  align-items: center;
  gap: 12px;
  width: 179px;
  font-size: 20px;
`;

const IconHolder = styled.span`
  position: relative;
`;

const Badge = styled.span`
  position: absolute;
  top: -1px;
  left: 18px;
  width: 18px;
  height: 18px;
  border-radius: 50%;
  background: #c42b1c;
  color: #fff;
  font-size: 14px;
  line-height: 18px;
  text-align: center;
`;

const WeatherText = styled.span`
  display: flex;
  gap: 12px;
`;

const Clock = styled.time`
  display: grid;
  width: 116px;
  font-size: 17px;
  line-height: 27px;
  text-align: center;
`;

const PreMark = styled.span`
  position: absolute;
  right: 0;
  bottom: 0;
  padding: 0 2px;
  border-radius: 2px;
  background: #fdc60a;
  color: #111;
  font-size: 9px;
  font-weight: 700;
  line-height: 11px;
`;

const ShowDesktop = styled.button`
  width: 8px;
  height: 60px;
  margin-left: 12px;
  border-left: 2px solid #a4b3bb;
`;

/* ---------- data ---------- */

const tabs = [
  OpenAiWhite, Colab, Hug, Barcode, Hug, Hug, Barcode, GitHub, GitHub, GitHub, GitHub, OpenAiBlack,
  Dots, Gfg, Gift, ELogo, DotGrid, Excel, OpenAiGreen, OneDrive, Excel, GfgWhite, LinkedIn, PinX,
  HexTeal, RedLines, PurpleG, Swirl, OneDrive, Swirl, LinkedIn, GitHub, GitHub, Hug, Google, Llama,
  WordGlyph, Hand, GreenA, WhatsApp, GitHub, Jupyter, Book, Shell, Seal, Piazza, ListPurple,
];

const bookmarks = [
  ["Impartus", Impartus], ["Gradescope", Gradescope], ["IITD Webmail", Seal], ["Moodle", Moodle],
  ["WhatsApp", WhatsApp], ["IIT DELHI", IitDelhi], ["Piazza", Piazza], ["Teams", Teams],
];

const columns = [95, 232, 113, 99, 106, 301, 241, 136, 135, 135, 0];

const results = [
  { rank: 12, user: "ilyafrombasement", entries: 6, date: ["2024-", "04-27", "15:22"], id: 57523, team: "roon", method: "biogptfromscratch", scores: ["0.4416", "0.1124", "0.4144", "0.8474"] },
  { rank: 13, user: "akankshakarotia", entries: 4, date: ["2024-", "04-29", "05:52"], id: 57868, team: "BioLay_AK_SS", method: "BART-submission_2", scores: ["0.4398", "0.1215", "0.4039", "0.8471"] },
  { rank: 14, user: "ekanshsingh", entries: 2, date: ["2024-", "04-26", "07:34"], id: 57302, team: "Empress", method: "test_submis", scores: ["0.4396", "0.1229", "0.4136", "0.8489"] },
  { rank: 15, user: "lkm1ml", entries: 2, date: ["2024-", "04-26", "19:36"], id: 57430, team: "naive_bhais", method: "baseline_v3", scores: ["0.4387", "0.1277", "0.4043", "0.8585"], active: true },
  { rank: 16, user: "atifanwer", entries: 4, date: ["2024-", "04-25", "16:55"], id: 57140, team: "Atif_Tanish", method: "COL772", scores: ["0.4382", "0.1196", "0.4101", "0.8484"] },
  { rank: 17, user: "MDS-CL", entries: 3, date: ["2024-", "04-11", "16:30"], id: 54424, team: "MDS-CL", method: "C_Zeroshot", scores: ["0.4343", "0.1198", "0.4013", "0.8555"] },
];

const ResultRow = ({ r }) => (
  <Row $active={r.active}>
    <Cell>{r.rank}</Cell>
    <Cell><UserLink href="#user">{r.user}</UserLink></Cell>
    <Cell>{r.entries}</Cell>
    <Cell>{r.date.map((line) => <DateLine key={line}>{line}</DateLine>)}</Cell>
    <Cell>{r.id}</Cell>
    <Cell>{r.team}</Cell>
    <Cell $wrap>{r.active ? <Selected>{r.method}</Selected> : r.method}</Cell>
    {r.scores.map((s, i) => <Cell key={i} $strong={i === 0}>{s}</Cell>)}
  </Row>
);

export default function App() {
  return (
    <Screen>
      <GlobalStyle />
      <TabStrip>
        <TabMenu aria-label="Search tabs">
          <Icon size={24} stroke="#1f1f1f" strokeWidth="2.500"><path d="M6.500 9.500l5.500 5.500 5.500-5.500" /></Icon>
        </TabMenu>
        <TabList>
          {tabs.map((Glyph, i) => (
            <React.Fragment key={i}>
              {i > 0 && <TabRule />}
              <Tab aria-label={`Tab ${i + 1}`}><Glyph /></Tab>
            </React.Fragment>
          ))}
        </TabList>
        <ActiveTab aria-label="Close tab">
          <Icon size={12} box="0 0 12 12" stroke="#1f1f1f" strokeWidth="2.200"><path d="M.8.8l10.400 10.400M11.200.8L.8 11.200" /></Icon>
        </ActiveTab>
        <StripButton $width={60} aria-label="New tab">
          <Icon size={16} box="0 0 16 16" stroke="#474747" strokeWidth="2.200"><path d="M8 0v16M0 8h16" /></Icon>
        </StripButton>
        <WindowControls>
          <StripButton $width={69} aria-label="Minimize">
            <Icon size={16} box="0 0 16 16" stroke="#000" strokeWidth="2"><path d="M0 7h15" /></Icon>
          </StripButton>
          <StripButton $width={69} aria-label="Restore">
            <Icon size={16} box="0 0 16 16" stroke="#000" strokeWidth="1.800"><path d="M1 5h9.500v9.500H1zM4.500 4V1.200h10v10H11.500" /></Icon>
          </StripButton>
          <StripButton $width={69} aria-label="Close">
            <Icon size={16} box="0 0 16 16" stroke="#000" strokeWidth="1.800"><path d="M.8.8l14.400 14.400M15.200.8L.8 15.200" /></Icon>
          </StripButton>
        </WindowControls>
      </TabStrip>

      <Toolbar>
        <ToolButton aria-label="Back">
          <Icon stroke="currentColor" strokeWidth="2.300"><path d="M21 12H4M12 3.500L3.500 12l8.500 8.500" /></Icon>
        </ToolButton>
        <ToolButton $faded aria-label="Forward">
          <Icon stroke="currentColor" strokeWidth="2.300"><path d="M3 12h17M12 3.500l8.500 8.500-8.500 8.500" /></Icon>
        </ToolButton>
        <ToolButton aria-label="Reload">
          <Icon stroke="currentColor" strokeWidth="2.400"><path d="M20 14.500A8.300 8.300 0 1 1 18.500 6.500L20 9M20.800 2.500V10H13.500" /></Icon>
        </ToolButton>
        <Omnibox>
          <SiteInfo aria-label="View site information">
            <Icon size={20} box="0 0 20 20" stroke="#1f1f1f" strokeWidth="2.400">
              <circle cx="4.500" cy="5" r="2.600" /><path d="M10.500 5H19M1 14.800h8.500" /><circle cx="15.500" cy="14.800" r="2.600" />
            </Icon>
          </SiteInfo>
          <Address aria-label="Address" readOnly value="codabench.org/competitions/1920/#/results-tab" />
          <Icon w={32} h={26} box="-4 0 32 26"><path d="M12 0l3 9h9.200l-7.400 5.600 2.900 9.200L12 18.200l-7.700 5.600 2.900-9.200L-.2 9H9z" fill="#0b57d0" /></Icon>
        </Omnibox>
        <ToolButton aria-label="Extensions">
          <Icon size={28} box="0 0 28 28" stroke="currentColor" strokeWidth="2.400" strokeLinejoin="round">
            <path d="M4.500 5.500h20v20h-20v-6c3.500-2 3.500-6 0-8z" />
            <path d="M12 4.500a3 3 0 0 1 5 0M25.500 13a3 3 0 0 1 0 5" fill="currentColor" />
          </Icon>
        </ToolButton>
        <Divider $space={11} />
        <ToolButton aria-label="Profile"><Avatar>L</Avatar></ToolButton>
        <ToolButton aria-label="Menu">
          <Icon><g fill="currentColor"><circle cx="12" cy="4" r="2.200" /><circle cx="12" cy="12.300" r="2.200" /><circle cx="12" cy="20.500" r="2.200" /></g></Icon>
        </ToolButton>
      </Toolbar>

      <BookmarkBar>
        <BookmarkList>
          {bookmarks.map(([label, Glyph]) => (
            <Bookmark key={label} href="#bookmark"><Glyph />{label}</Bookmark>
          ))}
        </BookmarkList>
        <Divider />
        <AllBookmarks>
          <Icon stroke="#474747" strokeWidth="2.200" strokeLinejoin="round"><path d="M1.200 4.500a1 1 0 0 1 1-1H9l2.500 3h11a1 1 0 0 1 1 1V19a1.500 1.500 0 0 1-1.500 1.500H2.700A1.500 1.500 0 0 1 1.200 19z" /></Icon>
          All Bookmarks
        </AllBookmarks>
      </BookmarkBar>

      <PageArea>
        <Page>
          <TableClip>
            <ResultsTable>
              <colgroup>{columns.map((w, i) => <Col key={i} $width={w} />)}</colgroup>
              <tbody>
                <tr>{columns.map((w, i) => <EdgeCell key={i} />)}</tr>
                {results.map((r) => <ResultRow key={r.rank} r={r} />)}
                <Row>{columns.map((w, i) => <Cell key={i}>{i === 3 && <DateLine>2024-</DateLine>}</Cell>)}</Row>
              </tbody>
            </ResultsTable>
          </TableClip>
        </Page>
        <ScrollBar>
          <ScrollArrow aria-label="Scroll up"><Icon w={12} h={6} box="0 0 12 6"><path d="M0 6l6-6 6 6z" fill="currentColor" /></Icon></ScrollArrow>
          <ScrollTrack><ScrollThumb /></ScrollTrack>
          <ScrollArrow aria-label="Scroll down"><Icon w={12} h={6} box="0 0 12 6"><path d="M0 0l6 6 6-6z" fill="currentColor" /></Icon></ScrollArrow>
        </ScrollBar>
      </PageArea>

      <Taskbar>
        <StartButton aria-label="Start"><StartLogo /></StartButton>
        <SearchBox>
          <SearchGlass />
          <SearchInput aria-label="Search" placeholder="Type here to search" />
          <DeskArt />
        </SearchBox>
        <TaskButton aria-label="Task View"><TaskView /></TaskButton>
        <TaskButton aria-label="File Explorer"><Explorer /></TaskButton>
        <TaskButton aria-label="Brave"><Brave /></TaskButton>
        <TaskButton aria-label="Edge"><Edge /></TaskButton>
        <TaskButton aria-label="Word"><WordGlyph size={36} /><Running /></TaskButton>
        <TaskButton aria-label="Visual Studio Code"><VsCode /><Running $tail={12} /></TaskButton>
        <TaskButton $current aria-label="Chrome"><Chrome /><Running $wide $tail={5} /></TaskButton>
        <Tray>
          <Weather>
            <IconHolder><Haze /><Badge>1</Badge></IconHolder>
            <WeatherText><span>34°C</span><span>Haze</span></WeatherText>
          </Weather>
          <TrayButton $width={36} aria-label="Show hidden icons">
            <Icon w={18} h={10} box="0 0 18 10" stroke="#111" strokeWidth="1.500"><path d="M.5 9.500L9 1l8.500 8.500" /></Icon>
          </TrayButton>
          <TrayButton $width={38} aria-label="Volume">
            <Icon stroke="#111" strokeWidth="1.400">
              <path d="M1.500 9H5l4.500-5v16L5 15H1.500z" /><path d="M13 9.500c1.200 1.500 1.200 3.500 0 5M16 7.500c2.200 2.700 2.200 6.300 0 9" /><path d="M19.500 5c3.600 4.200 3.600 9.800 0 14" stroke="#8d999f" />
            </Icon>
          </TrayButton>
          <TrayButton $width={50}>ENG</TrayButton>
          <Clock><span>22:41</span><span>06-05-2024</span></Clock>
          <TrayButton $width={60} aria-label="Notifications">
            <Icon><path d="M0 0h24v19h-9l-4 5-4-5H0z" fill="#000" /><path d="M5 5.500h14M5 9.500h14M5 13.500h9" stroke="#fff" strokeWidth="1.300" /></Icon>
          </TrayButton>
          <TrayButton $width={60} aria-label="Copilot">
            <IconHolder><Copilot /><PreMark>PRE</PreMark></IconHolder>
          </TrayButton>
          <ShowDesktop aria-label="Show desktop" />
        </Tray>
      </Taskbar>
    </Screen>
  );
}
